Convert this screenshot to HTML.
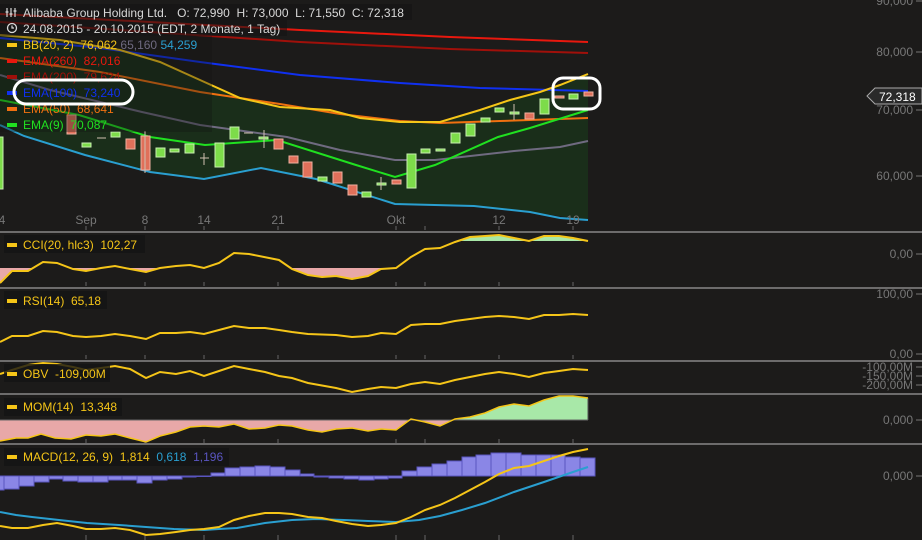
<!DOCTYPE html>
<html><head><meta charset="utf-8"><style>
html,body{margin:0;padding:0;background:#1c1b1a;}
svg{display:block;font-family:"Liberation Sans",sans-serif;}
text{white-space:pre;}
</style></head><body>
<svg width="922" height="540" viewBox="0 0 922 540" xmlns="http://www.w3.org/2000/svg" xml:space="preserve">
<defs>
<clipPath id="cciG"><rect x="0" y="232" width="600" height="9"/></clipPath>
<clipPath id="cciP"><rect x="0" y="268" width="600" height="20"/></clipPath>
<clipPath id="momG"><rect x="0" y="394" width="600" height="26"/></clipPath>
<clipPath id="momP"><rect x="0" y="420" width="600" height="24"/></clipPath>
</defs>
<rect width="922" height="540" fill="#1c1b1a"/>
<path d="M0,35 L60,40 L120,50 L160,62 L200,80 L240,98 L280,107 L330,110 L360,118 L400,122 L440,122 L480,110 L510,100 L540,92 L560,85 L588,74 L588,220 L530,212 L474,206 L395,204 L316,179 L261,168 L204,179 L150,172 L85,155 L24,136 L0,125 Z" fill="#1a2e1a"/>
<path d="M0,14 L150,22 L300,30 L450,37 L588,42" fill="none" stroke="#e8180e" stroke-width="2"/>
<path d="M0,22 L150,32 L300,42 L450,49 L588,53" fill="none" stroke="#a0100a" stroke-width="2"/>
<path d="M0,38 L100,48 L200,62 L300,75 L400,83 L480,88 L588,91" fill="none" stroke="#1030f0" stroke-width="2"/>
<path d="M0,58 L100,72 L200,92 L280,104 L340,114 L400,121 L440,123 L500,121 L588,118" fill="none" stroke="#f07010" stroke-width="2"/>
<path d="M0,35 L60,40 L120,50 L160,62 L200,80 L240,98 L280,107 L330,110 L360,118 L400,122 L440,122 L480,110 L510,100 L540,92 L560,85 L588,74" fill="none" stroke="#f5c518" stroke-width="2"/>
<path d="M0,75 L50,90 L142,112 L200,125 L287,137 L340,150 L395,160 L435,160 L514,151 L560,147 L588,141" fill="none" stroke="#6f6a80" stroke-width="2"/>
<path d="M0,125 L24,136 L85,155 L150,172 L204,179 L261,168 L316,179 L395,204 L474,206 L530,212 L560,218 L588,220" fill="none" stroke="#2a9fd0" stroke-width="2"/>
<path d="M0,100 L79,115 L150,137 L205,145 L277,140 L356,165 L395,177 L435,165 L498,137 L530,128 L588,110" fill="none" stroke="#20e020" stroke-width="2"/>
<g stroke-width="1">
<g fill="#7ddc4a" stroke="#c8f0b0">
<rect x="-3" y="137" width="6" height="52"/>
<rect x="82" y="143" width="9" height="4"/><rect x="111" y="132" width="9" height="5"/>
<rect x="156" y="148" width="9" height="9"/><rect x="170" y="149" width="9" height="3"/>
<rect x="185" y="144" width="9" height="9"/><rect x="215" y="143" width="9" height="24"/>
<rect x="230" y="127" width="9" height="12"/><rect x="259" y="137" width="9" height="2"/>
<rect x="318" y="177" width="9" height="4"/><rect x="362" y="192" width="9" height="5"/>
<rect x="377" y="183" width="9" height="2"/><rect x="407" y="154" width="9" height="34"/>
<rect x="421" y="149" width="9" height="4"/><rect x="436" y="149" width="9" height="2"/>
<rect x="451" y="133" width="9" height="10"/><rect x="466" y="124" width="9" height="12"/>
<rect x="481" y="118" width="9" height="4"/><rect x="495" y="108" width="9" height="4"/>
<rect x="510" y="112" width="9" height="2"/><rect x="540" y="99" width="9" height="15"/>
<rect x="569" y="94" width="9" height="5"/>
</g>
<g fill="#e0705a" stroke="#f0b0a0">
<rect x="67" y="115" width="9" height="19"/><rect x="126" y="139" width="9" height="10"/>
<rect x="141" y="136" width="9" height="34"/><rect x="274" y="139" width="9" height="10"/>
<rect x="289" y="156" width="9" height="7"/><rect x="303" y="162" width="9" height="15"/>
<rect x="333" y="172" width="9" height="11"/><rect x="348" y="185" width="9" height="10"/>
<rect x="392" y="180" width="9" height="4"/><rect x="525" y="113" width="9" height="6"/>
<rect x="555" y="96" width="9" height="2"/><rect x="584" y="92" width="9" height="4"/>
</g>
<g stroke="#d0c0b0"><line x1="97" y1="138" x2="106" y2="138"/><line x1="244" y1="133" x2="253" y2="133"/><line x1="200" y1="158" x2="209" y2="158"/><line x1="204" y1="153" x2="204" y2="165"/><line x1="145" y1="131" x2="145" y2="173"/><line x1="264" y1="130" x2="264" y2="148"/><line x1="381" y1="177" x2="381" y2="190"/><line x1="514" y1="104" x2="514" y2="120"/></g>
</g>
<g font-size="12">
<rect x="0" y="4" width="412" height="16" fill="#141414" opacity="0.6"/>
<rect x="0" y="20" width="287" height="16" fill="#141414" opacity="0.6"/>
<rect x="0" y="36" width="212" height="96" fill="#141414" opacity="0.35"/>
<text x="23" y="17" fill="#d8d8d8">Alibaba Group Holding Ltd.   O: 72,990  H: 73,000  L: 71,550  C: 72,318</text>
<path d="M7,8v9M11,8v9M15,8v9" stroke="#d8d8d8" stroke-width="1.2"/><path d="M5.5,12h3M9.5,14h3M13.5,11h3" stroke="#d8d8d8" stroke-width="1.2"/>
<circle cx="12" cy="28" r="4.5" fill="none" stroke="#d8d8d8" stroke-width="1.3"/><path d="M12,25.5 V28 H14" stroke="#d8d8d8" fill="none" stroke-width="1.2"/>
<text x="23" y="33" fill="#d8d8d8">24.08.2015 - 20.10.2015 (EDT, 2 Monate, 1 Tag)</text>
<rect x="7" y="43" width="10" height="4" fill="#f5c518"/><text x="23" y="49" fill="#f5c518">BB(20, 2)  76,062 <tspan fill="#6f6a80">65,160</tspan> <tspan fill="#2a9fd0">54,259</tspan></text>
<rect x="7" y="59" width="10" height="4" fill="#e8180e"/><text x="23" y="65" fill="#e8180e">EMA(260)  82,016</text>
<rect x="7" y="75" width="10" height="4" fill="#a0100a"/><text x="23" y="81" fill="#a0100a">EMA(200)  79,624</text>
<rect x="7" y="91" width="10" height="4" fill="#1030f0"/><text x="23" y="97" fill="#1030f0">EMA(100)  73,240</text>
<rect x="7" y="107" width="10" height="4" fill="#f07010"/><text x="23" y="113" fill="#f07010">EMA(50)  68,641</text>
<rect x="7" y="123" width="10" height="4" fill="#20e020"/><text x="23" y="129" fill="#20e020">EMA(9)  70,087</text>
</g>
<rect x="14" y="80" width="119" height="24" rx="12" fill="none" stroke="#fff" stroke-width="3"/>
<rect x="553" y="78" width="47" height="31" rx="10" fill="none" stroke="#fff" stroke-width="3"/>
<g font-size="12" fill="#777" text-anchor="end">
<text x="913" y="5">90,000</text><text x="913" y="56">80,000</text><text x="913" y="114">70,000</text><text x="913" y="180">60,000</text>
<text x="913" y="258">0,00</text><text x="913" y="298">100,00</text><text x="913" y="358">0,00</text>
<text x="913" y="371">-100,00M</text><text x="913" y="380">-150,00M</text><text x="913" y="389">-200,00M</text>
<text x="913" y="424">0,000</text><text x="913" y="480">0,000</text>
</g>
<g stroke="#777"><line x1="916" y1="1" x2="922" y2="1"/><line x1="916" y1="52" x2="922" y2="52"/><line x1="916" y1="110" x2="922" y2="110"/><line x1="916" y1="176" x2="922" y2="176"/><line x1="916" y1="254" x2="922" y2="254"/><line x1="916" y1="294" x2="922" y2="294"/><line x1="916" y1="354" x2="922" y2="354"/><line x1="916" y1="367" x2="922" y2="367"/><line x1="916" y1="376" x2="922" y2="376"/><line x1="916" y1="385" x2="922" y2="385"/><line x1="916" y1="420" x2="922" y2="420"/><line x1="916" y1="476" x2="922" y2="476"/></g>
<path d="M867,96 L875,88 L922,88 L922,104 L875,104 Z" fill="#2a2a2a" stroke="#aaa"/>
<text x="879" y="101" font-size="12" fill="#fff">72,318</text>
<g font-size="12" fill="#777" text-anchor="middle">
<text x="2" y="224">4</text><text x="86" y="224">Sep</text><text x="145" y="224">8</text><text x="204" y="224">14</text><text x="278" y="224">21</text><text x="396" y="224">Okt</text><text x="499" y="224">12</text><text x="573" y="224">19</text>
</g>
<g stroke="#888" stroke-width="1.5"><line x1="0" y1="232" x2="922" y2="232"/><line x1="0" y1="288" x2="922" y2="288"/><line x1="0" y1="361" x2="922" y2="361"/><line x1="0" y1="394" x2="922" y2="394"/><line x1="0" y1="444" x2="922" y2="444"/></g>
<g stroke="#666">
<path d="M86,226v4M145,226v4M204,226v4M278,226v4M396,226v4M425,226v4M499,226v4M573,226v4"/>
<path d="M86,282v4M145,282v4M204,282v4M278,282v4M396,282v4M425,282v4M499,282v4M573,282v4"/>
<path d="M86,355v4M145,355v4M204,355v4M278,355v4M396,355v4M425,355v4M499,355v4M573,355v4"/>
<path d="M86,439v4M145,439v4M204,439v4M278,439v4M396,439v4M425,439v4M499,439v4M573,439v4"/>
<path d="M86,535v5M145,535v5M204,535v5M278,535v5M396,535v5M425,535v5M499,535v5M573,535v5"/>
</g>
<path id="cci" d="M0,283 L12,271 L28,271 L43,262 L57,263 L73,269 L86,271 L101,268 L115,266 L130,269 L146,272 L160,268 L176,266 L190,265 L204,268 L219,263 L234,253 L249,254 L279,260 L292,269 L308,275 L322,277 L336,276 L352,279 L368,276 L381,269 L396,268 L411,257 L425,249 L440,248 L455,242 L470,237 L485,236 L499,235 L514,238 L529,241 L544,236 L559,236 L573,238 L588,241" fill="none"/>
<path clip-path="url(#cciG)" d="M0,283 L12,271 L28,271 L43,262 L57,263 L73,269 L86,271 L101,268 L115,266 L130,269 L146,272 L160,268 L176,266 L190,265 L204,268 L219,263 L234,253 L249,254 L279,260 L292,269 L308,275 L322,277 L336,276 L352,279 L368,276 L381,269 L396,268 L411,257 L425,249 L440,248 L455,242 L470,237 L485,236 L499,235 L514,238 L529,241 L544,236 L559,236 L573,238 L588,241 L588,241 L0,241Z" fill="#a8e8a8"/>
<path clip-path="url(#cciP)" d="M0,283 L12,271 L28,271 L43,262 L57,263 L73,269 L86,271 L101,268 L115,266 L130,269 L146,272 L160,268 L176,266 L190,265 L204,268 L219,263 L234,253 L249,254 L279,260 L292,269 L308,275 L322,277 L336,276 L352,279 L368,276 L381,269 L396,268 L411,257 L425,249 L440,248 L455,242 L470,237 L485,236 L499,235 L514,238 L529,241 L544,236 L559,236 L573,238 L588,241 L588,268 L0,268Z" fill="#e8a8a8"/>
<use href="#cci" stroke="#f5c518" stroke-width="2"/>
<path d="M0,342 L12,336 L28,336 L43,331 L57,332 L73,336 L86,337 L101,336 L115,334 L130,336 L146,339 L160,333 L176,333 L190,332 L204,334 L219,330 L234,326 L249,328 L265,328 L279,330 L292,332 L308,334 L336,335 L352,337 L368,336 L381,333 L396,334 L411,325 L425,324 L440,324 L455,321 L470,319 L485,317 L499,316 L514,317 L529,319 L544,315 L559,315 L573,314 L588,315" fill="none" stroke="#f5c518" stroke-width="2"/>
<path d="M0,374 L12,370 L28,365 L43,363 L57,364 L73,367 L86,370 L101,368 L115,366 L130,369 L146,378 L160,372 L176,374 L190,371 L204,376 L219,371 L234,366 L249,369 L265,372 L279,376 L292,378 L308,383 L336,388 L352,392 L368,389 L381,387 L396,388 L411,384 L425,382 L440,384 L455,380 L470,377 L485,374 L499,372 L514,374 L529,377 L544,373 L559,371 L573,369 L588,370" fill="none" stroke="#f5c518" stroke-width="2"/>
<path clip-path="url(#momP)" d="M0,441 L16,438 L28,438 L41,434 L55,438 L71,439 L86,435 L101,436 L115,434 L130,438 L146,442 L160,436 L176,432 L190,427 L204,426 L219,427 L234,424 L249,429 L265,428 L279,425 L292,426 L308,430 L322,432 L336,429 L352,428 L368,431 L381,429 L396,430 L411,419 L425,422 L440,426 L455,419 L470,417 L485,413 L499,407 L514,404 L529,406 L544,400 L559,396 L573,396 L588,398 L588,420 L0,420Z" fill="#e8a8a8"/>
<path clip-path="url(#momG)" d="M0,441 L16,438 L28,438 L41,434 L55,438 L71,439 L86,435 L101,436 L115,434 L130,438 L146,442 L160,436 L176,432 L190,427 L204,426 L219,427 L234,424 L249,429 L265,428 L279,425 L292,426 L308,430 L322,432 L336,429 L352,428 L368,431 L381,429 L396,430 L411,419 L425,422 L440,426 L455,419 L470,417 L485,413 L499,407 L514,404 L529,406 L544,400 L559,396 L573,396 L588,398 L588,420 L0,420Z" fill="#a8e8a8"/>
<line x1="0" y1="420" x2="588" y2="420" stroke="#666"/>
<line x1="588" y1="398" x2="588" y2="420" stroke="#555"/>
<path d="M0,441 L16,438 L28,438 L41,434 L55,438 L71,439 L86,435 L101,436 L115,434 L130,438 L146,442 L160,436 L176,432 L190,427 L204,426 L219,427 L234,424 L249,429 L265,428 L279,425 L292,426 L308,430 L322,432 L336,429 L352,428 L368,431 L381,429 L396,430 L411,419 L425,422 L440,426 L455,419 L470,417 L485,413 L499,407 L514,404 L529,406 L544,400 L559,396 L573,396 L588,398" fill="none" stroke="#f5c518" stroke-width="1.5"/>
<g fill="#8a86e6" stroke="#5a55c0">
<rect x="-1" y="476" width="5" height="14"/><rect x="4" y="476" width="15" height="13"/><rect x="19" y="476" width="15" height="10"/><rect x="34" y="476" width="15" height="6"/><rect x="49" y="476" width="14" height="3"/><rect x="63" y="476" width="15" height="5"/><rect x="78" y="476" width="15" height="6"/><rect x="93" y="476" width="15" height="6"/><rect x="108" y="476" width="14" height="4"/><rect x="122" y="476" width="15" height="4"/><rect x="137" y="476" width="15" height="7"/><rect x="152" y="476" width="15" height="4"/><rect x="167" y="476" width="15" height="3"/><rect x="182" y="476" width="14" height="1"/>
<rect x="196" y="476" width="15" height="0.5"/>
<rect x="211" y="473" width="14" height="3"/><rect x="225" y="468" width="15" height="8"/><rect x="240" y="467" width="15" height="9"/><rect x="255" y="466" width="15" height="10"/><rect x="270" y="467" width="15" height="9"/><rect x="285" y="470" width="15" height="6"/><rect x="300" y="474" width="14" height="2"/>
<rect x="314" y="476" width="15" height="1"/>
<rect x="329" y="476" width="15" height="2"/><rect x="344" y="476" width="15" height="3"/><rect x="359" y="476" width="15" height="4"/><rect x="374" y="476" width="14" height="3"/><rect x="388" y="476" width="14" height="2"/>
<rect x="402" y="471" width="15" height="5"/><rect x="417" y="467" width="15" height="9"/><rect x="432" y="464" width="15" height="12"/><rect x="447" y="461" width="15" height="15"/><rect x="462" y="457" width="14" height="19"/><rect x="476" y="455" width="15" height="21"/><rect x="491" y="453" width="15" height="23"/><rect x="506" y="453" width="15" height="23"/><rect x="521" y="455" width="15" height="21"/><rect x="536" y="455" width="15" height="21"/><rect x="551" y="455" width="14" height="21"/><rect x="565" y="457" width="15" height="19"/><rect x="580" y="458" width="15" height="18"/>
</g>
<path d="M0,512 L16,515 L32,517 L59,520 L87,523 L119,525 L146,527 L174,529 L204,530 L219,529 L237,528 L265,523 L292,520 L316,519 L344,520 L368,521 L396,522 L419,520 L440,516 L462,510 L485,503 L514,492 L544,482 L573,472 L588,467" fill="none" stroke="#2a9fd0" stroke-width="2"/>
<path d="M0,526 L12,528 L28,528 L43,525 L57,523 L73,526 L86,529 L101,529 L115,528 L130,530 L146,535 L160,534 L176,532 L190,530 L204,529 L219,527 L234,520 L249,516 L265,513 L279,513 L292,514 L308,517 L322,518 L336,521 L352,524 L368,526 L381,525 L396,523 L411,517 L425,510 L440,505 L455,498 L470,490 L485,482 L499,474 L514,468 L529,466 L544,461 L559,456 L573,452 L588,449" fill="none" stroke="#f5c518" stroke-width="2"/>
<g font-size="12">
<rect x="4" y="235" width="141" height="18" fill="#141414" opacity="0.8"/>
<rect x="7" y="243" width="10" height="4" fill="#f5c518"/><text x="23" y="249" fill="#f5c518">CCI(20, hlc3)  102,27</text>
<rect x="4" y="291" width="103" height="18" fill="#141414" opacity="0.8"/>
<rect x="7" y="299" width="10" height="4" fill="#f5c518"/><text x="23" y="305" fill="#f5c518">RSI(14)  65,18</text>
<rect x="4" y="364" width="106" height="18" fill="#141414" opacity="0.8"/>
<rect x="7" y="372" width="10" height="4" fill="#f5c518"/><text x="23" y="378" fill="#f5c518">OBV  -109,00M</text>
<rect x="4" y="398" width="118" height="18" fill="#141414" opacity="0.8"/>
<rect x="7" y="405" width="10" height="4" fill="#f5c518"/><text x="23" y="411" fill="#f5c518">MOM(14)  13,348</text>
<rect x="4" y="448" width="225" height="18" fill="#141414" opacity="0.8"/>
<rect x="7" y="455" width="10" height="4" fill="#f5c518"/><text x="23" y="461" fill="#f5c518">MACD(12, 26, 9)  1,814  <tspan fill="#2a9fd0">0,618</tspan>  <tspan fill="#5a55c0">1,196</tspan></text>
</g>
</svg>
</body></html>
